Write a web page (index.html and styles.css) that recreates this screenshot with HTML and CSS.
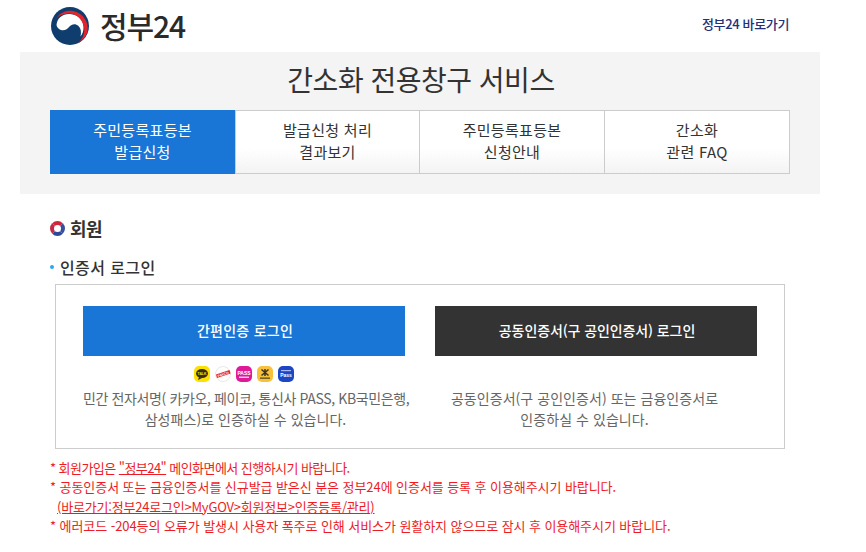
FILE: index.html
```html
<!DOCTYPE html>
<html lang="ko">
<head>
<meta charset="utf-8">
<title>정부24 간소화 전용창구 서비스</title>
<link rel="stylesheet" href="styles.css">
</head>
<body>
<div class="page">
  <header class="top">
    <a class="logo">
      <svg class="emblem" width="40" height="38" viewBox="0 0 40 38">
        <circle cx="20" cy="19" r="19" fill="#0f3d6e"/>
        <path d="M6.5 18C7 11 13 6.5 20 7C28 7.5 33.5 13 33.5 20C33.7 24 32.5 27 30.5 29.5C31.5 25 31 21.5 28.5 19C25.5 16 21.5 17 19.5 19.5C17.5 22 14.5 24 11 23C8.5 22 7 20.5 6.5 18Z" fill="#fff"/>
        <path d="M6 12C10 5 17 3 23 4C33 6 39 15 37.5 24C36.5 29 33 33 28 36.5C33 31 35 26 34 20C32 11 25 6 18 6.5C12 7 8 9 6 12Z" fill="#e0252c"/>
      </svg>
      <span class="logo-text">정부24</span>
    </a>
    <a class="shortcut"><b>정부24</b> 바로가기</a>
  </header>
  <section class="band">
    <h1 class="title">간소화 전용창구 서비스</h1>
    <nav class="tabs">
      <a class="tab active">주민등록표등본<br>발급신청</a>
      <a class="tab">발급신청 처리<br>결과보기</a>
      <a class="tab">주민등록표등본<br>신청안내</a>
      <a class="tab">간소화<br>관련 FAQ</a>
    </nav>
  </section>
  <main class="content">
    <h2 class="section"><span class="ring"></span>회원</h2>
    <h3 class="sub"><span class="dot"></span>인증서 로그인</h3>
    <div class="box">
      <div class="col">
        <a class="btn blue">간편인증 로그인</a>
        <div class="icons">
          <svg width="16" height="16" viewBox="0 0 16 16"><rect width="16" height="16" rx="5" fill="#fae100"/><ellipse cx="8" cy="7.5" rx="6" ry="4.6" fill="#3c2a1e"/><path d="M5 11l-1 3 4-2z" fill="#3c2a1e"/><text class="mini" x="8" y="9" fill="#fae100">TALK</text></svg>
          <svg width="16" height="16" viewBox="0 0 16 16"><circle cx="8" cy="8" r="7.5" fill="#fff" stroke="#e8e8e8"/><path d="M1 8.5L14.5 4l1 3.5L2 12z" fill="#e8202e"/><text class="mini" x="8" y="9.5" fill="#fff" transform="rotate(-18 8 8)">PAYCO</text></svg>
          <svg width="16" height="16" viewBox="0 0 16 16"><rect width="16" height="16" rx="5" fill="#e0189a"/><text class="pass" x="8" y="8.5" fill="#fff">PASS</text><rect x="3" y="10.5" width="10" height="1.5" fill="#f8c8e8"/></svg>
          <svg width="16" height="16" viewBox="0 0 16 16"><rect width="16" height="16" rx="5" fill="#f8c13a"/><path d="M4.5 3.5l7 6M11.5 3.5l-7 6M8 3v7" stroke="#3a3226" stroke-width="1.5"/><rect x="3" y="11.5" width="10" height="1.3" fill="#5a4a26"/></svg>
          <svg width="16" height="16" viewBox="0 0 16 16"><rect width="16" height="16" rx="5" fill="#1c46c4"/><rect x="3" y="4" width="10" height="1.2" fill="#a8b8f0"/><text class="pass" x="8" y="11" fill="#fff">Pass</text></svg>
        </div>
        <p class="desc"><span class="tight">민간 전자서명( 카카오, 페이코, 통신사 PASS, KB국민은행,</span><br>삼성패스)로 인증하실 수 있습니다.</p>
      </div>
      <div class="col">
        <a class="btn dark">공동인증서(구 공인인증서) 로그인</a>
        <div class="icons"></div>
        <p class="desc shifted">공동인증서(구 공인인증서) 또는 금융인증서로<br>인증하실 수 있습니다.</p>
      </div>
    </div>
    <ul class="notes">
      <li class="note-tight">* 회원가입은 <u>"정부24"</u> 메인화면에서 진행하시기 바랍니다.</li>
      <li>* 공동인증서 또는 금융인증서를 신규발급 받은신 분은 정부24에 인증서를 등록 후 이용해주시기 바랍니다.</li>
      <li class="indent"><u>(바로가기:정부24로그인&gt;MyGOV&gt;회원정보&gt;인증등록/관리)</u></li>
      <li>* 에러코드 -204등의 오류가 발생시 사용자 폭주로 인해 서비스가 원활하지 않으므로 잠시 후 이용해주시기 바랍니다.</li>
    </ul>
  </main>
</div>
</body>
</html>
```
FILE: styles.css
```css
* { box-sizing: border-box; }
html, body { margin: 0; padding: 0; background: #fff; }
body {
  font-family: "Noto Sans CJK KR", "Noto Sans", sans-serif;
  color: #333;
  overflow: hidden;
}
.page { width: 800px; margin-left: 20px; }
.top {
  height: 52px;
  padding: 7px 30px 0;
  display: flex;
  justify-content: space-between;
  align-items: flex-start;
}
.logo { display: flex; align-items: center; gap: 10px; }
.emblem { display: block; }
.logo-text { font-size: 30px; line-height: 34px; padding-bottom: 2px; font-weight: 500; color: #2a2a2a; letter-spacing: -1.1px; }
.shortcut { font-size: 13px; line-height: 20px; margin-top: 7px; color: #22327a; font-weight: 500; letter-spacing: -0.35px; margin-right: 1px; }
.shortcut b { font-weight: 500; }
.band {
  height: 142px;
  background: #f4f4f4;
  padding: 0 30px;
}
.title {
  margin: 0;
  height: 58px;
  padding-left: 2px;
  font-size: 28px;
  line-height: 55px;
  font-weight: 400;
  text-align: center;
  letter-spacing: -0.5px;
  color: #333;
}
.tabs {
  display: grid;
  grid-template-columns: 185px 184px 185px 185px;
  height: 64px;
  background: linear-gradient(#fff 60%, #f3f3f3);
  border: 1px solid #ccc;
  border-left: 0;
}
.tab {
  display: flex;
  align-items: center;
  justify-content: center;
  text-align: center;
  font-size: 15px;
  line-height: 22px;
  letter-spacing: 0.3px;
  color: #333;
  border-left: 1px solid #ccc;
  padding-bottom: 2px;
}
.tab.active {
  background: #1976d6;
  color: #fff;
  margin: -1px 0;
  border-left: 0;
}
.content { padding: 0 30px; }
.section {
  margin: 21px 0 0;
  font-size: 18px;
  line-height: 27px;
  font-weight: 700;
  color: #333;
  display: flex;
  align-items: center;
  letter-spacing: -0.5px;
}
.ring {
  width: 15px;
  height: 15px;
  border-radius: 50%;
  border: 4px solid;
  border-color: #d0263a #3a4f9a #2b4a9c #c02c48;
  margin-right: 5px;
}
.sub {
  margin: 12px 0 0;
  font-size: 16px;
  line-height: 26px;
  font-weight: 500;
  color: #333;
  display: flex;
  align-items: center;
  letter-spacing: 0.4px;
}
.dot {
  width: 4px;
  height: 4px;
  border-radius: 50%;
  background: #2ea7f2;
  margin-right: 6px;
}
.box {
  width: 730px;
  height: 165px;
  margin: 4px 0 0 5px;
  border: 1px solid #ccc;
  padding: 21px 27px 0;
  display: flex;
  justify-content: space-between;
}
.col { width: 322px; text-align: center; }
.btn {
  display: block;
  height: 50px;
  padding-left: 2px;
  font-size: 14px;
  font-weight: 500;
  line-height: 49px;
  color: #fff;
}
.btn.blue { background: #1976d6; letter-spacing: 0.25px; }
.btn.dark { background: #333; letter-spacing: -0.1px; }
.icons {
  height: 26px;
  padding-top: 10px;
  display: flex;
  justify-content: center;
  gap: 5px;
}
.icons svg { display: block; }
.mini { font-family: "Liberation Sans", sans-serif; font-size: 3.4px; font-weight: 700; text-anchor: middle; }
.pass { font-family: "Liberation Sans", sans-serif; font-size: 5px; font-weight: 700; text-anchor: middle; }
.desc {
  margin: 6px -3px 0 0;
  font-size: 14px;
  line-height: 21px;
  color: #666;
  letter-spacing: 0.05px;
  white-space: nowrap;
}
.tight { letter-spacing: -0.38px; }
.desc.shifted { margin-right: 23px; }
.notes {
  list-style: none;
  margin: 9px 0 0;
  padding: 0;
  font-size: 13px;
  line-height: 19.3px;
  color: #ed1c24;
  letter-spacing: -0.07px;
  white-space: nowrap;
}
.note-tight { letter-spacing: -0.55px; }
.indent { padding-left: 7px; letter-spacing: -0.2px; }
```
